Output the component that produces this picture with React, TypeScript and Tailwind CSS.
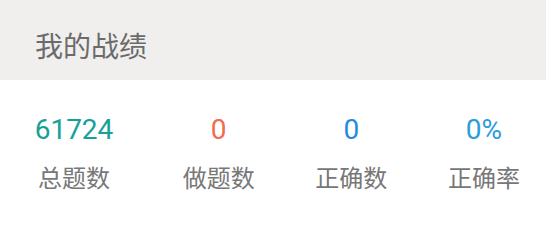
import React from 'react'

interface Stat {
  label: string
  value: string
  color: string
  width: string
}

const STATS: Stat[] = [
  { label: '总题数', value: '61724', color: 'text-[#17a097]', width: 'w-[96px]' },
  { label: '做题数', value: '0', color: 'text-[#f26b4c]', width: 'w-[72px]' },
  { label: '正确数', value: '0', color: 'text-[#1e8ce3]', width: 'w-[72px]' },
  { label: '正确率', value: '0%', color: 'text-[#2a9dda]', width: 'w-[72px]' },
]

export default function App() {
  return (
    <div
      className="w-[546px] h-[222px] bg-white overflow-hidden"
      style={{ fontFamily: "Roboto, 'Noto Sans CJK SC', sans-serif" }}
    >
      <div className="h-[80px] bg-[#f0efed] pl-[35px] pt-[34px]">
        <h2 className="text-[28px] leading-[28px] text-[#6b6b6b]">我的战绩</h2>
      </div>

      <div className="flex justify-between px-[26px] pt-[36px]">
        {STATS.map((s) => (
          <div key={s.label} className={`${s.width} flex flex-col items-center`}>
            <span className={`text-[28px] leading-[28px] ${s.color}`}>{s.value}</span>
            <span className="mt-[23px] text-[24px] leading-[24px] text-[#777777] whitespace-nowrap">
              {s.label}
            </span>
          </div>
        ))}
      </div>
    </div>
  )
}
